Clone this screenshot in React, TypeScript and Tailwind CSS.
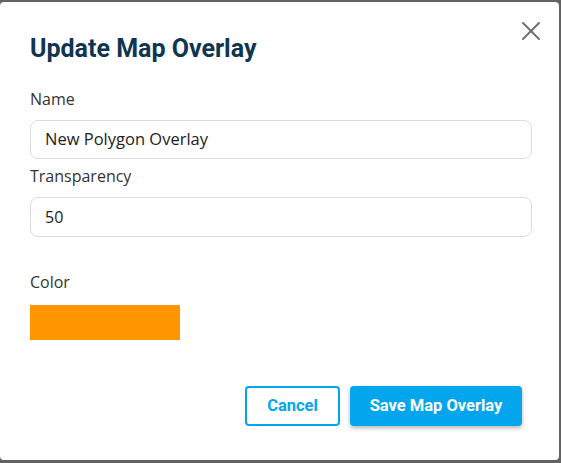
import { X } from 'lucide-react';

const labelFont = { fontFamily: '"Open Sans", "Noto Sans", sans-serif' };

export default function App() {
  return (
    <div className="w-[561px] h-[463px] bg-[#626262] overflow-hidden pt-[2px] pr-[2px]">
      <div className="relative h-[458px] bg-white rounded-[4px] px-[30px] font-['Roboto',sans-serif]">
        <button type="button" className="absolute right-[12px] top-[13px] text-[#707070]">
          <X className="w-[32px] h-[32px]" strokeWidth={1.5} />
        </button>
        <h2 className="pt-[30px] text-[25px] leading-[34px] font-bold text-[#0f3550]">
          Update Map Overlay
        </h2>

        <div className="flex flex-col text-[16px] text-[#333]" style={labelFont}>
          <label className="mt-[22px] leading-[22px]">Name</label>
          <div className="mt-[10px] h-[39px] w-[502px] border border-[#dcdcdc] rounded-[8px] flex items-center px-[14px] text-[#222] text-[16.5px]">
            New Polygon Overlay
          </div>
          <label className="mt-[6px] leading-[22px]">Transparency</label>
          <div className="mt-[10px] h-[40px] w-[502px] border border-[#dcdcdc] rounded-[8px] flex items-center px-[14px] text-[#222]">
            50
          </div>
          <label className="mt-[34px] leading-[22px]">Color</label>
          <div className="mt-[12px] w-[150px] h-[35px] bg-[#ff9500]" />
        </div>

        <div className="flex justify-end gap-[10px] mt-[46px] pr-[7px]">
          <button
            type="button"
            className="w-[95px] h-[40px] border-2 border-[#03a6ec] rounded-[4px] text-[#03a6ec] text-[16.5px] font-bold"
          >
            Cancel
          </button>
          <button
            type="button"
            className="w-[172px] h-[40px] bg-[#03a6ec] rounded-[4px] text-white text-[16.5px] font-bold shadow-[0_2px_4px_rgba(0,0,0,0.3)]"
          >
            Save Map Overlay
          </button>
        </div>
      </div>
    </div>
  );
}
